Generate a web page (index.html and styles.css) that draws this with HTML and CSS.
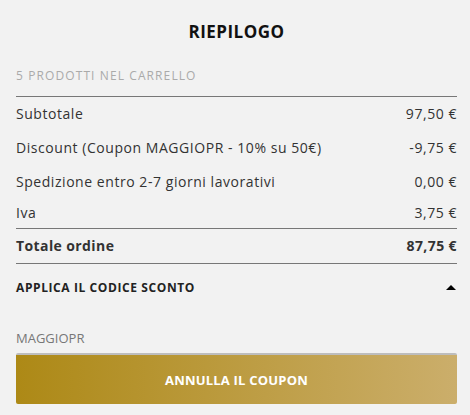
FILE: index.html
```
<!DOCTYPE html>
<html lang="it">
<head>
<meta charset="utf-8">
<link rel="stylesheet" href="styles.css">
</head>
<body>
<div class="summary">
  <h1 class="title">RIEPILOGO</h1>
  <div class="count">5 PRODOTTI NEL CARRELLO</div>
  <div class="rows">
    <div class="row"><span>Subtotale</span><span>97,50 €</span></div>
    <div class="row"><span>Discount (Coupon MAGGIOPR - 10% su 50€)</span><span>-9,75 €</span></div>
    <div class="row"><span>Spedizione entro 2-7 giorni lavorativi</span><span>0,00 €</span></div>
    <div class="row row-last"><span>Iva</span><span>3,75 €</span></div>
  </div>
  <div class="row total"><span>Totale ordine</span><span>87,75 €</span></div>
  <div class="coupon-head"><span>APPLICA IL CODICE SCONTO</span><span class="caret"></span></div>
  <div class="coupon-code">MAGGIOPR</div>
  <button class="btn">ANNULLA IL COUPON</button>
</div>
</body>
</html>
```
FILE: styles.css
```
html, body {
  margin: 0;
  padding: 0;
  background: #f2f2f2;
}
body {
  font-family: "Open Sans", "DejaVu Sans", sans-serif;
  color: #333;
}
.summary {
  padding: 0 13px 0 16px;
  display: flex;
  flex-direction: column;
}
.title {
  margin: 0;
  padding-top: 19px;
  height: 26px;
  line-height: 26px;
  font-size: 17px;
  font-weight: 700;
  text-align: center;
  color: #111;
  letter-spacing: 0.5px;
}
.count {
  margin-top: 21px;
  font-size: 12px;
  line-height: 20px;
  letter-spacing: 1.1px;
  color: #aaa;
  padding-bottom: 10px;
  border-bottom: 1px solid #777;
}
.rows {
  border-bottom: 1px solid #777;
}
.row {
  display: flex;
  justify-content: space-between;
  font-size: 14px;
  letter-spacing: 0.55px;
  height: 34px;
  line-height: 34px;
}
.row-last {
  height: 29px;
  line-height: 28px;
}
.total {
  font-weight: 700;
  letter-spacing: 0.4px;
  height: 34px;
  line-height: 34px;
  border-bottom: 1px solid #777;
}
.coupon-head {
  display: flex;
  justify-content: space-between;
  align-items: center;
  height: 47px;
  font-size: 12px;
  font-weight: 700;
  letter-spacing: 0.6px;
  color: #222;
}
.caret {
  width: 0;
  height: 0;
  border-left: 5px solid transparent;
  border-right: 5px solid transparent;
  border-bottom: 5px solid #000;
  margin-right: 1px;
}
.coupon-code {
  margin-top: 17px;
  font-size: 13px;
  line-height: 20px;
  color: #777;
  padding-bottom: 5px;
}
.btn {
  height: 51px;
  border: none;
  border-top: 2px solid #bdbdbd;
  border-radius: 2px;
  background: linear-gradient(to right, #ad8916, #cbae6b);
  color: #fff;
  font-family: inherit;
  font-size: 13px;
  font-weight: 700;
  letter-spacing: 0.2px;
  padding: 0;
}
```
